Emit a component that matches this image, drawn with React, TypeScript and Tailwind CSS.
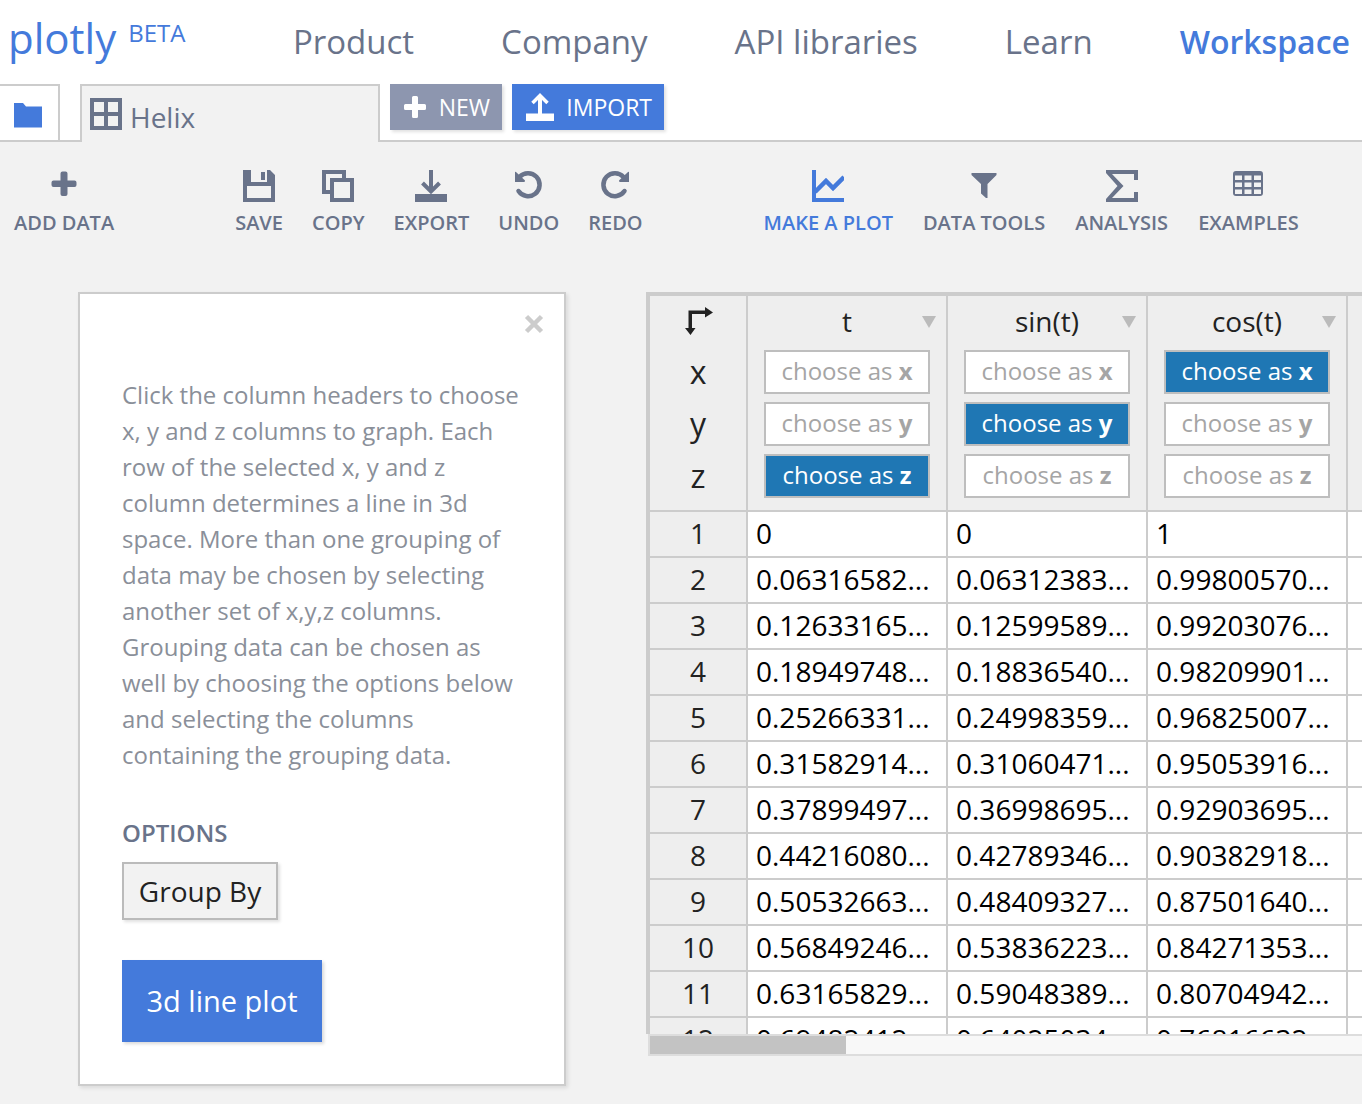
import React from "react";

const navLinks = ["Product", "Company", "API libraries", "Learn"];

type Axis = "x" | "y" | "z";
const axes: Axis[] = ["x", "y", "z"];

const columns: { name: string; axis: Axis }[] = [
  { name: "t", axis: "z" },
  { name: "sin(t)", axis: "y" },
  { name: "cos(t)", axis: "x" },
];

const rows = [
  ["0", "0", "1"],
  ["0.06316582...", "0.06312383...", "0.99800570..."],
  ["0.12633165...", "0.12599589...", "0.99203076..."],
  ["0.18949748...", "0.18836540...", "0.98209901..."],
  ["0.25266331...", "0.24998359...", "0.96825007..."],
  ["0.31582914...", "0.31060471...", "0.95053916..."],
  ["0.37899497...", "0.36998695...", "0.92903695..."],
  ["0.44216080...", "0.42789346...", "0.90382918..."],
  ["0.50532663...", "0.48409327...", "0.87501640..."],
  ["0.56849246...", "0.53836223...", "0.84271353..."],
  ["0.63165829...", "0.59048389...", "0.80704942..."],
  ["0.69482412...", "0.64025034...", "0.76816632..."],
];

function Icon({ children }: { children: React.ReactNode }) {
  return (
    <svg viewBox="0 0 32 32" className="size-8 shrink-0" fill="currentColor" aria-hidden="true">
      {children}
    </svg>
  );
}

const icons = {
  plus: (
    <path d="M12.5 3.5 Q12.5 1.5 14.5 1.5 H17.5 Q19.5 1.5 19.5 3.5 V10.5 H26.5 Q28.5 10.5 28.5 12.5 V15 Q28.5 17 26.5 17 H19.5 V24 Q19.5 26 17.5 26 H14.5 Q12.5 26 12.5 24 V17 H5.5 Q3.5 17 3.5 15 V12.5 Q3.5 10.5 5.5 10.5 H12.5 Z" />
  ),
  save: <path fillRule="evenodd" d="M0 0 H8 V12 H24 V0 H27 L32 5 V32 H0 Z M4 16 V28 H28 V16 Z M18 2 H22 V10 H18 Z" />,
  copy: <path fillRule="evenodd" d="M0 0 H24 V8 H32 V32 H8 V24 H0 Z M4 4 V20 H8 V8 H20 V4 Z M12 12 V28 H28 V12 Z" />,
  export: (
    <>
      <path d="M14 0 H18 V20 H14 Z M0 24 H32 V32 H0 Z" />
      <path d="M7.5 13 L16 21.5 L24.5 13" fill="none" stroke="currentColor" strokeWidth="4" />
    </>
  ),
  undo: (
    <>
      <path d="M6.5 7 A11.5 11.5 0 1 1 5.5 21" fill="none" stroke="currentColor" strokeWidth="4.5" strokeLinecap="round" />
      <path d="M2 2 Q2 1.5 3 2 L12 10.5 Q12 12 11 12 H2 Z" />
    </>
  ),
  redo: (
    <>
      <path d="M24.5 7 A11.5 11.5 0 1 0 25.5 21" fill="none" stroke="currentColor" strokeWidth="4.5" strokeLinecap="round" />
      <path d="M30 2 Q30 1.5 29 2 L20 10.5 Q20 12 21 12 H30 Z" />
    </>
  ),
  plot: (
    <>
      <path d="M0 0 H4 V28 H32 V32 H0 Z" />
      <path d="M3 22 L14 11 L21 18 L32 7" fill="none" stroke="currentColor" strokeWidth="4.5" />
    </>
  ),
  filter: <path d="M3.5 3 H28.5 V5 L19.5 14 V28 H18 L13 23.5 V14 L3.5 5 Z" />,
  sigma: <path d="M0 0 H32 V10 H28 V4 H6 L17.5 16 L6 28 H28 V22 H32 V32 H0 V29 L11.5 16 L0 3 Z" />,
  table: (
    <path
      fillRule="evenodd"
      d="M4 1 H28 Q31 1 31 4 V23 Q31 26 28 26 H4 Q1 26 1 23 V4 Q1 1 4 1 Z M3 5.5 V10 H10 V5.5 Z M12.5 5.5 V10 H19.5 V5.5 Z M22 5.5 V10 H29 V5.5 Z M3 12.5 V17 H10 V12.5 Z M12.5 12.5 V17 H19.5 V12.5 Z M22 12.5 V17 H29 V12.5 Z M3 19.5 V24 H10 V19.5 Z M12.5 19.5 V24 H19.5 V19.5 Z M22 19.5 V24 H29 V19.5 Z"
    />
  ),
};

function Tool({ icon, label, active = false }: { icon: keyof typeof icons; label: string; active?: boolean }) {
  return (
    <button
      type="button"
      className={`flex flex-col items-center gap-2 whitespace-nowrap text-[20px] leading-[26px] font-semibold ${active ? "text-[#447adb]" : "text-[#69738a]"}`}
    >
      <Icon>{icons[icon]}</Icon>
      {label}
    </button>
  );
}

function Header() {
  return (
    <header className="flex h-[84px] items-start bg-white pr-3 pl-2">
      <a href="#home" className="flex items-start gap-3 text-[#447adb]">
        <span className="text-[42px] leading-[76px]">plotly</span>
        <span className="text-[24px] leading-[66px]">BETA</span>
      </a>
      <nav className="ml-auto flex gap-[87px] text-[33px] leading-[84px] whitespace-nowrap text-[#69738a]">
        {navLinks.map((l) => (
          <a key={l} href="#nav">
            {l}
          </a>
        ))}
        <a href="#workspace" className="text-[32px] font-semibold text-[#447adb]">
          Workspace
        </a>
      </nav>
    </header>
  );
}

function TabBar() {
  return (
    <div className="flex h-[58px] bg-white text-[23px]">
      <button type="button" aria-label="Files" className="flex w-[60px] items-center justify-center border-t-2 border-r-2 border-b-2 border-[#ccc] pt-1 pr-0.5">
        <svg viewBox="0 0 28 26" className="h-[26px] w-7" fill="#447adb" aria-hidden="true">
          <path d="M0 1 H9 L12 4.5 H28 V25.5 H0 Z" />
        </svg>
      </button>
      <div className="w-5 border-b-2 border-[#ccc]" />
      <button type="button" className="flex w-[300px] gap-2 border-x-2 border-t-2 border-[#ccc] bg-[#f2f2f2] pt-3 pl-2 text-[28px] leading-[38px] text-[#69738a]">
        <Icon>
          <path fillRule="evenodd" d="M0 0 H32 V32 H0 Z M4 4 V14 H14 V4 Z M18 4 V14 H28 V4 Z M4 18 V28 H14 V18 Z M18 18 V28 H28 V18 Z" />
        </Icon>
        Helix
      </button>
      <div className="flex flex-1 items-start gap-2.5 border-b-2 border-[#ccc] pl-2.5 text-white">
        <button type="button" className="flex h-[46px] w-28 items-center justify-between bg-[#8d96af] pr-3 pl-3.5 shadow-[2px_2px_3px_rgba(0,0,0,0.12)]">
          <svg viewBox="0 0 22 22" className="size-[22px]" fill="currentColor" aria-hidden="true">
            <path d="M8 1.5 Q8 0 9.5 0 H12.5 Q14 0 14 1.5 V8 H20.5 Q22 8 22 9.5 V12.5 Q22 14 20.5 14 H14 V20.5 Q14 22 12.5 22 H9.5 Q8 22 8 20.5 V14 H1.5 Q0 14 0 12.5 V9.5 Q0 8 1.5 8 H8 Z" />
          </svg>
          NEW
        </button>
        <button type="button" className="flex h-[46px] w-[152px] items-center justify-between bg-[#447adb] pr-3 pl-3.5 shadow-[2px_2px_3px_rgba(0,0,0,0.12)]">
          <svg viewBox="0 0 28 28" className="size-7" fill="currentColor" aria-hidden="true">
            <path d="M12 3 H16 V21 H12 Z M0 20.5 H28 V28 H0 Z" />
            <path d="M6.5 10 L14 2.5 L21.5 10" fill="none" stroke="currentColor" strokeWidth="3.5" />
          </svg>
          IMPORT
        </button>
      </div>
    </div>
  );
}

function Toolbar() {
  return (
    <div className="flex gap-[121px] px-3.5 pt-7">
      <Tool icon="plus" label="ADD DATA" />
      <div className="flex gap-[29px]">
        <Tool icon="save" label="SAVE" />
        <Tool icon="copy" label="COPY" />
        <Tool icon="export" label="EXPORT" />
        <Tool icon="undo" label="UNDO" />
        <Tool icon="redo" label="REDO" />
      </div>
      <div className="flex gap-[30px]">
        <Tool icon="plot" label="MAKE A PLOT" active />
        <Tool icon="filter" label="DATA TOOLS" />
        <Tool icon="sigma" label="ANALYSIS" />
        <Tool icon="table" label="EXAMPLES" />
      </div>
    </div>
  );
}

function PlotPanel() {
  return (
    <section className="relative w-[488px] shrink-0 border-2 border-[#ccc] bg-white px-[42px] pt-[83px] pb-[42px] shadow-[2px_2px_4px_rgba(0,0,0,0.1)]">
      <button type="button" aria-label="Close" className="absolute top-5 right-5 text-[#ccc]">
        <svg viewBox="0 0 20 20" className="size-5" aria-hidden="true">
          <path d="M2.5 2.5 L17.5 17.5 M17.5 2.5 L2.5 17.5" stroke="currentColor" strokeWidth="4.5" />
        </svg>
      </button>
      <p className="text-[24px] leading-9 text-[#8a8f99]">
        Click the column headers to choose x, y and z columns to graph. Each row of the selected x, y and z column
        determines a line in 3d space. More than one grouping of data may be chosen by selecting another set of x,y,z
        columns. Grouping data can be chosen as well by choosing the options below and selecting the columns containing
        the grouping data.
      </p>
      <h2 className="mt-10 text-[24px] leading-[40px] font-semibold text-[#69738a]">OPTIONS</h2>
      <button type="button" className="mt-[9px] block h-[58px] w-[156px] border-2 border-[#bbb] bg-[#f2f2f2] text-[28px] text-[#222] shadow-[2px_2px_3px_rgba(0,0,0,0.12)]">
        Group By
      </button>
      <button type="button" className="mt-10 block h-[82px] w-[200px] bg-[#447adb] text-[29px] text-white shadow-[2px_2px_3px_rgba(0,0,0,0.15)]">
        3d line plot
      </button>
    </section>
  );
}

function Grid() {
  return (
    <div className="min-w-0 flex-1">
      <div className="h-[742px] overflow-hidden border-t-4 border-l-4 border-[#ccc] bg-white">
        <table className="w-[898px] table-fixed border-separate border-spacing-0 text-[28px] leading-[42px]">
          <thead>
            <tr>
              <th scope="col" className="w-[98px] border-r-2 border-b-2 border-[#ccc] bg-[#eee] p-0 align-top font-normal text-[#222]">
                <div className="flex h-[54px] items-center justify-center pb-1 pl-0.5">
                  <svg viewBox="0 0 28 28" className="size-7" fill="#222" aria-hidden="true">
                    <path d="M3.5 3.5 H20 V0 L28 5.5 L20 10.5 V7 H7 V21 H10.5 L5.5 28 L0 21 H3.5 Z" />
                  </svg>
                </div>
                <div className="flex flex-col gap-2">
                  {axes.map((a) => (
                    <span key={a} className="text-[32px] leading-[44px]">
                      {a}
                    </span>
                  ))}
                </div>
              </th>
              {columns.map((c) => (
                <th key={c.name} scope="col" className="w-[200px] border-r-2 border-b-2 border-[#ccc] bg-[#eee] p-0 align-top font-normal text-[#222]">
                  <div className="relative h-[54px] leading-[50px]">
                    {c.name}
                    <button type="button" aria-label={`${c.name} menu`} className="absolute top-5 right-2.5">
                      <svg viewBox="0 0 14 12" className="h-3 w-3.5" fill="#bbb" aria-hidden="true">
                        <path d="M0 0 H14 L7 12 Z" />
                      </svg>
                    </button>
                  </div>
                  <div className="flex flex-col gap-2 px-4 pb-3">
                    {axes.map((a) => (
                      <button
                        key={a}
                        type="button"
                        aria-pressed={c.axis === a}
                        className={`h-11 border-2 border-[#bebebe] pb-0.5 text-[24px] leading-[38px] ${c.axis === a ? "bg-[#1f77b4] text-white" : "bg-white text-[#a5a5a5]"}`}
                      >
                        choose as <b className="font-bold">{a}</b>
                      </button>
                    ))}
                  </div>
                </th>
              ))}
              <th className="w-[200px] border-b-2 border-[#ccc] bg-[#eee]" />
            </tr>
          </thead>
          <tbody>
            {rows.map((r, i) => (
              <tr key={i}>
                <th scope="row" className="border-r-2 border-b-2 border-[#ccc] bg-[#eee] p-0 pb-0.5 font-normal text-[#222]">
                  {i + 1}
                </th>
                {r.map((v, j) => (
                  <td key={j} className="border-r-2 border-b-2 border-[#ccc] p-0 pb-0.5 pl-2 text-black">
                    {v}
                  </td>
                ))}
                <td className="border-b-2 border-[#ccc]" />
              </tr>
            ))}
          </tbody>
        </table>
      </div>
      <div className="ml-0.5 border-2 border-r-0 border-[#ddd] bg-[#f8f8f8]">
        <div className="h-[18px] w-[196px] bg-[#c3c3c3]" />
      </div>
    </div>
  );
}

export default function App() {
  return (
    <div className="min-h-screen overflow-hidden bg-[#f2f2f2] font-['Open_Sans',sans-serif]">
      <Header />
      <TabBar />
      <Toolbar />
      <main className="flex items-start gap-20 pt-14 pb-[18px] pl-[78px]">
        <PlotPanel />
        <Grid />
      </main>
    </div>
  );
}
